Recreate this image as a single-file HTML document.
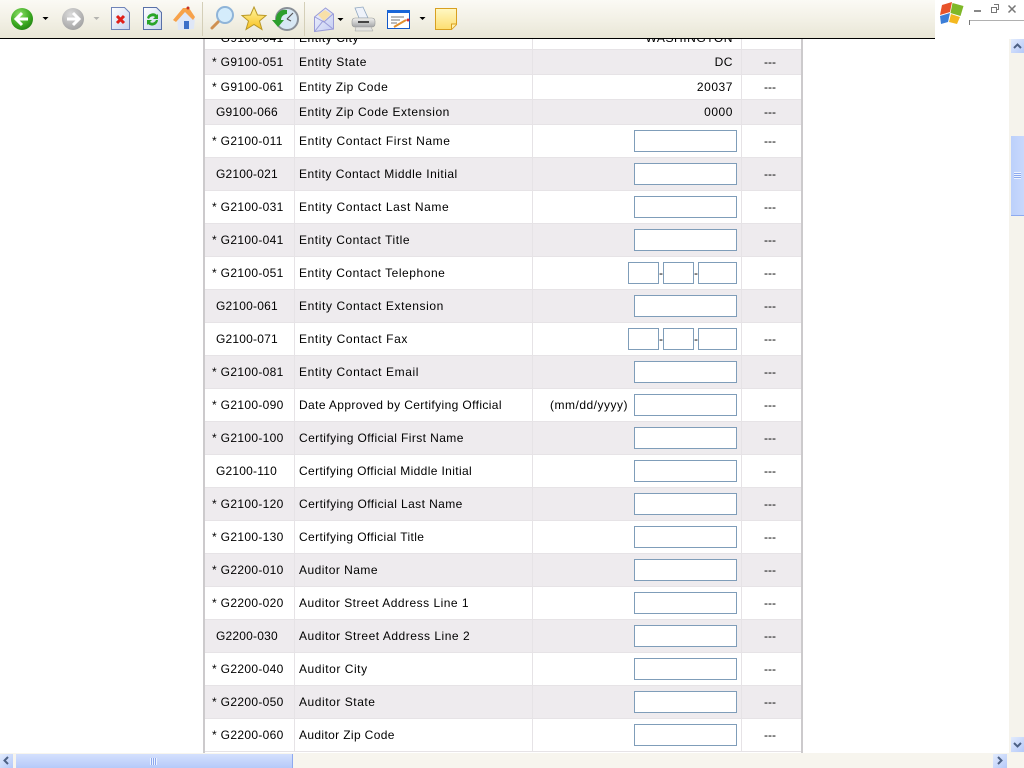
<!DOCTYPE html>
<html><head><meta charset="utf-8"><style>
html,body{margin:0;padding:0;background:#fff;width:1024px;height:768px;overflow:hidden}
body{position:relative;font:12px "Liberation Sans",Arial,sans-serif;color:#000}
.a{position:absolute}
.r{position:absolute;left:205px;width:596px;box-sizing:border-box;border-bottom:1px solid #e6e3e6}
.r.e{background:#eeebee}
.r span{position:absolute;top:0;white-space:pre;letter-spacing:.55px}
.r span.c{left:7px;letter-spacing:.33px}
.r span.c.n{left:11px;letter-spacing:.2px}
.l{left:94px}
.v{right:68px}
.r span.d{left:559px;letter-spacing:0}
.i{position:absolute;box-sizing:border-box;height:22px;border:1px solid #7f9db9;background:#fff}
</style></head><body>
<div class="a" style="left:203px;top:39px;width:2px;height:714px;background:#cccacc"></div>
<div class="a" style="left:801px;top:39px;width:2px;height:714px;background:#cccacc"></div>
<div class="r" style="top:26px;height:24px;line-height:24px"><span class="c">* G9100-041</span><span class="l">Entity City</span><span class="v">WASHINGTON</span></div>
<div class="r e" style="top:50px;height:25px;line-height:25px"><span class="c">* G9100-051</span><span class="l">Entity State</span><span class="v">DC</span><span class="d">---</span></div>
<div class="r" style="top:75px;height:25px;line-height:25px"><span class="c">* G9100-061</span><span class="l" style="letter-spacing:.48px">Entity Zip Code</span><span class="v">20037</span><span class="d">---</span></div>
<div class="r e" style="top:100px;height:25px;line-height:25px"><span class="c n">G9100-066</span><span class="l" style="letter-spacing:.51px">Entity Zip Code Extension</span><span class="v">0000</span><span class="d">---</span></div>
<div class="r" style="top:125px;height:33px;line-height:33px"><span class="c">* G2100-011</span><span class="l" style="letter-spacing:.59px">Entity Contact First Name</span><span class="d">---</span><div class="i" style="left:429px;top:5px;width:103px"></div></div>
<div class="r e" style="top:158px;height:33px;line-height:33px"><span class="c n">G2100-021</span><span class="l" style="letter-spacing:.48px">Entity Contact Middle Initial</span><span class="d">---</span><div class="i" style="left:429px;top:5px;width:103px"></div></div>
<div class="r" style="top:191px;height:33px;line-height:33px"><span class="c">* G2100-031</span><span class="l" style="letter-spacing:.59px">Entity Contact Last Name</span><span class="d">---</span><div class="i" style="left:429px;top:5px;width:103px"></div></div>
<div class="r e" style="top:224px;height:33px;line-height:33px"><span class="c">* G2100-041</span><span class="l">Entity Contact Title</span><span class="d">---</span><div class="i" style="left:429px;top:5px;width:103px"></div></div>
<div class="r" style="top:257px;height:33px;line-height:33px"><span class="c">* G2100-051</span><span class="l">Entity Contact Telephone</span><span class="d">---</span><div class="i" style="left:423px;top:5px;width:31px"></div><span style="left:454px;letter-spacing:0">-</span><div class="i" style="left:458px;top:5px;width:31px"></div><span style="left:489px;letter-spacing:0">-</span><div class="i" style="left:493px;top:5px;width:39px"></div></div>
<div class="r e" style="top:290px;height:33px;line-height:33px"><span class="c n">G2100-061</span><span class="l" style="letter-spacing:.59px">Entity Contact Extension</span><span class="d">---</span><div class="i" style="left:429px;top:5px;width:103px"></div></div>
<div class="r" style="top:323px;height:33px;line-height:33px"><span class="c n">G2100-071</span><span class="l" style="letter-spacing:.61px">Entity Contact Fax</span><span class="d">---</span><div class="i" style="left:423px;top:5px;width:31px"></div><span style="left:454px;letter-spacing:0">-</span><div class="i" style="left:458px;top:5px;width:31px"></div><span style="left:489px;letter-spacing:0">-</span><div class="i" style="left:493px;top:5px;width:39px"></div></div>
<div class="r e" style="top:356px;height:33px;line-height:33px"><span class="c">* G2100-081</span><span class="l" style="letter-spacing:.6px">Entity Contact Email</span><span class="d">---</span><div class="i" style="left:429px;top:5px;width:103px"></div></div>
<div class="r" style="top:389px;height:33px;line-height:33px"><span class="c">* G2100-090</span><span class="l" style="letter-spacing:.38px">Date Approved by Certifying Official</span><span class="d">---</span><span style="left:345px;letter-spacing:.5px">(mm/dd/yyyy)</span><div class="i" style="left:429px;top:5px;width:103px"></div></div>
<div class="r e" style="top:422px;height:33px;line-height:33px"><span class="c">* G2100-100</span><span class="l" style="letter-spacing:.41px">Certifying Official First Name</span><span class="d">---</span><div class="i" style="left:429px;top:5px;width:103px"></div></div>
<div class="r" style="top:455px;height:33px;line-height:33px"><span class="c n">G2100-110</span><span class="l" style="letter-spacing:.37px">Certifying Official Middle Initial</span><span class="d">---</span><div class="i" style="left:429px;top:5px;width:103px"></div></div>
<div class="r e" style="top:488px;height:33px;line-height:33px"><span class="c">* G2100-120</span><span class="l" style="letter-spacing:.41px">Certifying Official Last Name</span><span class="d">---</span><div class="i" style="left:429px;top:5px;width:103px"></div></div>
<div class="r" style="top:521px;height:33px;line-height:33px"><span class="c">* G2100-130</span><span class="l" style="letter-spacing:.38px">Certifying Official Title</span><span class="d">---</span><div class="i" style="left:429px;top:5px;width:103px"></div></div>
<div class="r e" style="top:554px;height:33px;line-height:33px"><span class="c">* G2200-010</span><span class="l" style="letter-spacing:.47px">Auditor Name</span><span class="d">---</span><div class="i" style="left:429px;top:5px;width:103px"></div></div>
<div class="r" style="top:587px;height:33px;line-height:33px"><span class="c">* G2200-020</span><span class="l" style="letter-spacing:.48px">Auditor Street Address Line 1</span><span class="d">---</span><div class="i" style="left:429px;top:5px;width:103px"></div></div>
<div class="r e" style="top:620px;height:33px;line-height:33px"><span class="c n">G2200-030</span><span class="l" style="letter-spacing:.52px">Auditor Street Address Line 2</span><span class="d">---</span><div class="i" style="left:429px;top:5px;width:103px"></div></div>
<div class="r" style="top:653px;height:33px;line-height:33px"><span class="c">* G2200-040</span><span class="l">Auditor City</span><span class="d">---</span><div class="i" style="left:429px;top:5px;width:103px"></div></div>
<div class="r e" style="top:686px;height:33px;line-height:33px"><span class="c">* G2200-050</span><span class="l">Auditor State</span><span class="d">---</span><div class="i" style="left:429px;top:5px;width:103px"></div></div>
<div class="r" style="top:719px;height:33px;line-height:33px"><span class="c">* G2200-060</span><span class="l" style="letter-spacing:.36px">Auditor Zip Code</span><span class="d">---</span><div class="i" style="left:429px;top:5px;width:103px"></div></div>
<div class="a" style="left:294px;top:39px;width:1px;height:713px;background:#e6e3e6"></div>
<div class="a" style="left:532px;top:39px;width:1px;height:713px;background:#e6e3e6"></div>
<div class="a" style="left:741px;top:39px;width:1px;height:713px;background:#e6e3e6"></div>

<!-- toolbar -->
<div class="a" style="left:0;top:0;width:935px;height:38px;background:linear-gradient(#fbfaf5,#f1efe3 60%,#e9e6d6);border-bottom:1px solid #000"></div>
<div class="a" style="left:935px;top:0;width:89px;height:39px;background:#fff"></div>
<svg class="a" style="left:0;top:0" width="1024" height="39" viewBox="0 0 1024 39">
<defs>
<radialGradient id="g" cx=".4" cy=".3" r=".8"><stop offset="0" stop-color="#8fe06a"/><stop offset=".6" stop-color="#3aa820"/><stop offset="1" stop-color="#1c7a10"/></radialGradient>
<radialGradient id="gy" cx=".4" cy=".3" r=".8"><stop offset="0" stop-color="#dcdcdc"/><stop offset="1" stop-color="#9c9c9c"/></radialGradient>
<linearGradient id="doc" x1="0" y1="0" x2="1" y2="1"><stop offset="0" stop-color="#fff"/><stop offset="1" stop-color="#c6d3ee"/></linearGradient>
<linearGradient id="st" x1="0" y1="0" x2="0" y2="1"><stop offset="0" stop-color="#fff6a0"/><stop offset="1" stop-color="#f8c020"/></linearGradient>
<linearGradient id="nt" x1="0" y1="0" x2="0" y2="1"><stop offset="0" stop-color="#fff8c4"/><stop offset="1" stop-color="#fdde70"/></linearGradient>
<linearGradient id="ml" x1="0" y1="0" x2="1" y2="1"><stop offset="0" stop-color="#f0f3fd"/><stop offset="1" stop-color="#c4cdf2"/></linearGradient>
<linearGradient id="pr" x1="0" y1="0" x2="0" y2="1"><stop offset="0" stop-color="#f2f2f0"/><stop offset="1" stop-color="#a4a6a8"/></linearGradient>
</defs>
<circle cx="22" cy="19" r="11" fill="url(#g)"/>
<path d="M28 19H17M22 13l-6 6 6 6" fill="none" stroke="#fff" stroke-width="3"/>
<path d="M42.500 17h6l-3 3z" fill="#000"/>
<circle cx="73" cy="19" r="11" fill="url(#gy)"/>
<path d="M67 19h11M73 13l6 6-6 6" fill="none" stroke="#fff" stroke-width="3"/>
<path d="M93.500 17h6l-3 3z" fill="#b4b4b0"/>
<path d="M111.500 7.500h13l5 5v17h-18z" fill="url(#doc)" stroke="#7084b8"/>
<path d="M117 16l7 7M124 16l-7 7" stroke="#e0201a" stroke-width="3"/>
<path d="M143.500 7.500h13l5 5v17h-18z" fill="url(#doc)" stroke="#5870a8"/>
<path d="M147 18a6 6 0 0 1 10-3l1-1v5h-5l2-2a4 4 0 0 0-6 2zM158 20a6 6 0 0 1-10 4l-1 1v-5h5l-2 2a4 4 0 0 0 6-2z" fill="#2aa52a"/>
<path d="M177 17l9-7 9 7-1 12-16 1z" fill="#dfe7f7"/>
<path d="M173 20l10-12h6l6 9-2 3-8-8-9 10z" fill="#f7a24a"/>
<path d="M184 29v-8h5v8z" fill="#3d70c8"/>
<circle cx="188" cy="8" r="1.500" fill="#c83020"/>
<rect x="202" y="2" width="1" height="34" fill="#d4cfb8"/>
<circle cx="225" cy="15" r="8" fill="#d4ecfb" stroke="#8fb4d8" stroke-width="2"/>
<path d="M218 22l-6 6" stroke="#cf9050" stroke-width="3" stroke-linecap="round"/>
<path d="M254 7l3.500 8 8.500.5-6.500 5.500 2.500 8.500-8-5-8 5 2.500-8.500-6.500-5.500 8.500-.5z" fill="url(#st)" stroke="#b89828"/>
<circle cx="287" cy="19" r="11" fill="#d8e8f4" stroke="#8a9098" stroke-width="2"/>
<path d="M287 19l6-6M287 19l4 2" stroke="#555" stroke-width="1.200"/>
<path d="M276 20a9 9 0 0 1 11-10v4a6 6 0 0 0-6 6l3 0-6 7-6-7z" fill="#2c9e2c"/>
<rect x="304" y="2" width="1" height="34" fill="#d4cfb8"/>
<path d="M314.500 17l11-9 8 6v15l-19 2.500z" fill="url(#ml)" stroke="#9a9cd8"/>
<path d="M318 15l7-5 6 4-7 7z" fill="#f8e0a8"/>
<path d="M315 31l8-10 10 8M315 17l9 5 9-8" fill="none" stroke="#9a9cd8"/>
<path d="M337.500 18h6l-3 3z" fill="#000"/>
<path d="M355 8l8-1 5 11h-9z" fill="#eef2fa" stroke="#8fa6c0" stroke-width=".8"/>
<rect x="352" y="18" width="23" height="9" rx="3" fill="url(#pr)" stroke="#969898" stroke-width=".6"/>
<rect x="358" y="21" width="11" height="2" fill="#444"/>
<path d="M356 27h15l2 4h-18z" fill="#e4e4e0" stroke="#a0a0a0" stroke-width=".5"/>
<rect x="387.500" y="10.500" width="22" height="18" fill="#fff" stroke="#1258c8"/>
<rect x="387" y="10" width="23" height="3" fill="#1a66d8"/>
<path d="M391 17h13M391 20h9M391 23h6" stroke="#777"/>
<path d="M394 27l12-7" stroke="#e09030" stroke-width="2"/><circle cx="408" cy="20" r="1.500" fill="#d83030"/>
<path d="M419.500 17h6l-3 3z" fill="#000"/>
<path d="M435.500 8.500h21v16l-5 5h-16z" fill="url(#nt)" stroke="#d8a020"/>
<path d="M451.500 29v-5h5" fill="#fff2b0" stroke="#d8a020"/>
<path d="M942 5l10-3-2 10-10 3z" fill="#e8532a"/><path d="M952.500 3l11 3-3 10-10-3z" fill="#7fb828"/><path d="M940 16l10-3-2 9-7 2z" fill="#3c7ed8"/><path d="M951 14l9 3-3 7-8-2z" fill="#f4b820"/>
<rect x="974" y="10" width="7" height="2" fill="#888"/>
<path d="M991.500 7.500h5v5h-5zM994 4.500h4.500v5h-2" fill="none" stroke="#777"/>
<path d="M1008.500 5.500l7 7M1015.500 5.500l-7 7" stroke="#777" stroke-width="1.500"/>
<rect x="969" y="20" width="55" height="1" fill="#b0b0b0"/><rect x="969" y="20" width="1" height="5" fill="#777"/>
</svg>

<!-- vertical scrollbar -->
<div class="a" style="left:1009px;top:39px;width:15px;height:714px;background:#f5f3ec"></div>
<div class="a" style="left:1011px;top:39px;width:13px;height:14px;background:linear-gradient(135deg,#e2ebfd,#b5c9f9)"></div>
<svg class="a" style="left:1011px;top:39px" width="13" height="14"><path d="M3 9l3.500-3.500L10 9" fill="none" stroke="#4d6185" stroke-width="2"/></svg>
<div class="a" style="left:1011px;top:136px;width:13px;height:80px;background:linear-gradient(90deg,#bcd0fb,#c8d8fc);box-shadow:inset 0 -1px #8eaaf0"></div>
<div class="a" style="left:1014px;top:172px;width:7px;height:7px;background:repeating-linear-gradient(#eef3fe 0 1px,#8ca8ee 1px 2px)"></div>
<div class="a" style="left:1011px;top:737px;width:13px;height:15px;background:linear-gradient(135deg,#e2ebfd,#b5c9f9)"></div>
<svg class="a" style="left:1011px;top:737px" width="13" height="15"><path d="M3 6l3.500 3.500L10 6" fill="none" stroke="#4d6185" stroke-width="2"/></svg>
<!-- horizontal scrollbar -->
<div class="a" style="left:0;top:753px;width:1024px;height:15px;background:#f7f5ee"></div>
<div class="a" style="left:0;top:754px;width:13px;height:14px;background:linear-gradient(135deg,#e2ebfd,#b5c9f9)"></div>
<svg class="a" style="left:0;top:754px" width="13" height="14"><path d="M8 3L4.500 6.500 8 10" fill="none" stroke="#4d6185" stroke-width="2"/></svg>
<div class="a" style="left:16px;top:754px;width:277px;height:14px;background:linear-gradient(#d4e0fd,#b6caf9);border-right:1px solid #8eaaf0;box-sizing:border-box"></div>
<div class="a" style="left:150px;top:758px;width:7px;height:7px;background:repeating-linear-gradient(90deg,#eef3fe 0 1px,#8ca8ee 1px 2px)"></div>
<div class="a" style="left:993px;top:754px;width:14px;height:14px;background:linear-gradient(135deg,#e2ebfd,#b5c9f9)"></div>
<svg class="a" style="left:993px;top:754px" width="14" height="14"><path d="M5 3l3.500 3.500L5 10" fill="none" stroke="#4d6185" stroke-width="2"/></svg>
</body></html>
